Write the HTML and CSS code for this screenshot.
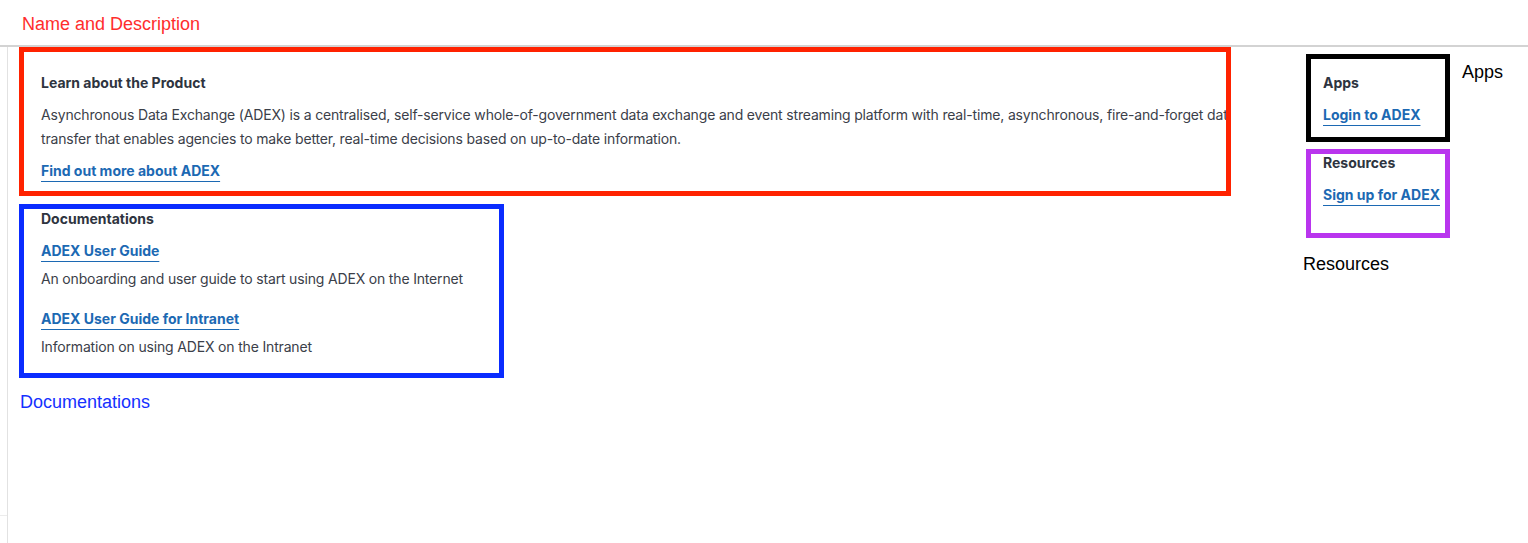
FILE: index.html
```html
<!DOCTYPE html>
<html lang="en">
<head>
<meta charset="utf-8">
<title>ADEX</title>
<link rel="stylesheet" href="styles.css">
</head>
<body>
<header class="top">
  <span class="tag tag-red">Name and Description</span>
</header>
<div class="main">
  <div class="rail"><div class="rail-seg"></div></div>
  <div class="left">
    <section class="box box-red">
      <h3 class="title">Learn about the Product</h3>
      <p class="desc">Asynchronous Data Exchange (ADEX) is a centralised, self-service whole-of-government data exchange and event streaming platform with real-time, asynchronous, fire-and-forget data transfer that enables agencies to make better, real-time decisions based on up-to-date information.</p>
      <a class="link" href="#">Find out more about ADEX</a>
    </section>
    <section class="box box-blue">
      <h3 class="title">Documentations</h3>
      <div class="doc">
        <a class="link" href="#">ADEX User Guide</a>
        <p class="text">An onboarding and user guide to start using ADEX on the Internet</p>
      </div>
      <div class="doc">
        <a class="link" href="#">ADEX User Guide for Intranet</a>
        <p class="text">Information on using ADEX on the Intranet</p>
      </div>
    </section>
    <span class="tag tag-blue">Documentations</span>
  </div>
  <aside class="right">
    <div class="apps-row">
      <section class="box box-black">
        <h3 class="title">Apps</h3>
        <a class="link" href="#">Login to ADEX</a>
      </section>
      <span class="tag tag-black tag-apps">Apps</span>
    </div>
    <section class="box box-purple">
      <h3 class="title title-tight">Resources</h3>
      <a class="link" href="#">Sign up for ADEX</a>
    </section>
    <span class="tag tag-black tag-res">Resources</span>
  </aside>
</div>
</body>
</html>
```

FILE: styles.css
```css
* { box-sizing: border-box; }

html, body {
  margin: 0;
  padding: 0;
  background: #ffffff;
}

body {
  font-family: Inter, "Noto Sans", sans-serif;
  font-size: 14px;
  color: #3b4049;
}

.top {
  height: 47px;
  border-bottom: 2px solid #d3d3d3;
  padding-left: 22px;
  display: flex;
  align-items: center;
}

.tag {
  font-family: "Liberation Sans", Arial, sans-serif;
  font-size: 18px;
  line-height: 22px;
  display: block;
}

.tag-red { color: #ff2d2d; margin-top: 3px; }
.tag-blue { color: #1530ff; margin-top: 13px; margin-left: 1px; }
.tag-black { color: #000000; }

.main {
  display: flex;
  min-height: calc(100vh - 47px);
}

.rail {
  width: 8px;
  border-right: 1px solid #e2e2e2;
  flex: none;
}

.rail-seg {
  height: 469px;
  border-bottom: 1px solid #ececec;
}

.left {
  margin-left: 11px;
  width: 1212px;
  flex: none;
  display: flex;
  flex-direction: column;
  align-items: flex-start;
}

.box {
  border: 5px solid;
  overflow: hidden;
  background: #fff;
}

.box-red {
  border-color: #ff2200;
  width: 1212px;
  height: 149px;
  padding: 21px 0 8px 17px;
}

.box-blue {
  border-color: #0a2cff;
  width: 485px;
  height: 174px;
  margin-top: 8px;
  padding: 0 0 14px 17px;
}

.title {
  margin: 0;
  font-size: 14px;
  line-height: 20px;
  font-weight: 700;
  color: #2e3440;
}

.title-tight { line-height: 18px; }

.desc {
  margin: 10px 0 8px;
  width: 1212px;
  line-height: 24px;
  letter-spacing: -0.17px;
  color: #3b4049;
}

.link {
  display: inline-block;
  font-weight: 700;
  line-height: 24px;
  color: #1c69b3;
  text-decoration: underline;
  text-decoration-thickness: 1px;
  text-underline-offset: 5px;
}

.doc {
  display: flex;
  flex-direction: column;
  align-items: flex-start;
  margin-top: 10px;
}

.doc + .doc { margin-top: 16px; }

.text {
  margin: 4px 0 0;
  line-height: 24px;
  letter-spacing: -0.17px;
  color: #3b4049;
}

.right {
  margin-left: 71px;
  display: flex;
  flex-direction: column;
  align-items: flex-start;
  padding-top: 7px;
}

.apps-row {
  display: flex;
  align-items: flex-start;
  margin-left: 4px;
}

.box-black {
  border-color: #000000;
  width: 144px;
  height: 88px;
  padding: 14px 0 10px 12px;
}

.box-black .link { margin-top: 10px; }

.box-purple .link { margin-top: 11px; }

.tag-apps { margin-left: 12px; margin-top: 7px; }

.box-purple {
  border-color: #b935ee;
  width: 144px;
  height: 89px;
  margin-top: 7px;
  margin-left: 4px;
  padding: 0 0 26px 12px;
}

.box-black, .box-purple {
  display: flex;
  flex-direction: column;
  align-items: flex-start;
}

.tag-res { margin-top: 15px; margin-left: 1px; }
```
